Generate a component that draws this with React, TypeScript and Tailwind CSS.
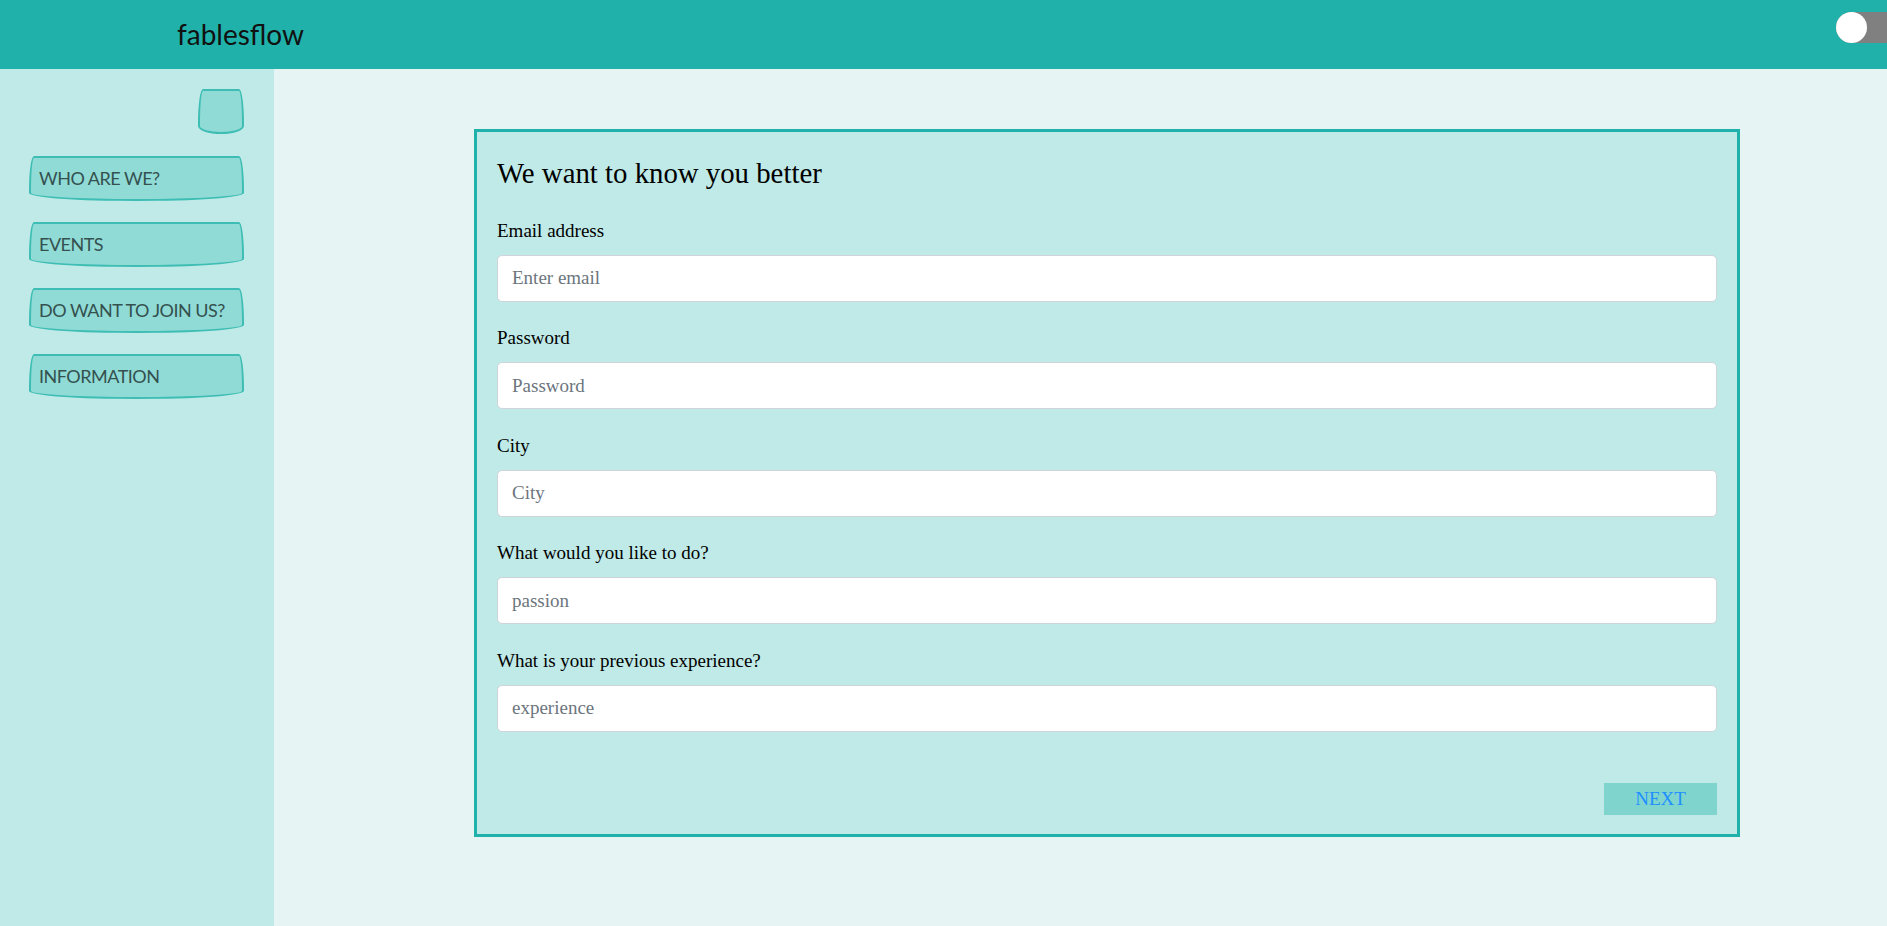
import React from "react";

const navShape =
  "border-2 border-[#3dbdb3] bg-[#90dbd6] rounded-[5px_5px_50%_50%/34px_34px_8px_8px]";

function NavButton({ label }: { label: string }) {
  return (
    <button
      className={`${navShape} ml-[29px] w-[215px] h-[45px] flex items-center pl-[8px] text-left text-[18px] tracking-[-0.5px] text-[#34514f] font-['Lato','Open_Sans',sans-serif]`}
    >
      {label}
    </button>
  );
}

function Field({ label, placeholder, type = "text" }: { label: string; placeholder: string; type?: string }) {
  return (
    <div className="mb-[21.5px]">
      <label className="block text-[19px] leading-[29px] mb-[10px] text-black">{label}</label>
      <input
        type={type}
        placeholder={placeholder}
        className="block w-full h-[47px] bg-white border border-[#ced4da] rounded-[5px] px-[14px] text-[19px] text-[#495057] placeholder:text-[#6c757d] outline-none font-['Liberation_Serif',serif]"
      />
    </div>
  );
}

export default function App() {
  return (
    <div className="h-screen flex flex-col font-['Liberation_Serif',serif] overflow-hidden">
      <header className="relative h-[69px] shrink-0 bg-[#20b2aa] overflow-hidden flex items-center pl-[177px]">
        <span className="text-[28px] text-[#111] font-['Lato',sans-serif] pb-[2px]">fablesflow</span>
        <div className="absolute top-[12px] right-[-24px] w-[75px] h-[31px] rounded-full bg-[#808080]">
          <div className="w-[31px] h-[31px] rounded-full bg-white" />
        </div>
      </header>
      <div className="flex flex-1 min-h-0">
        <aside className="w-[274px] shrink-0 bg-[#c0eae8] flex flex-col pt-[20px]">
          <button className={`${navShape} self-end mr-[30px] w-[46px] h-[45px]`} aria-label="menu" />
          <div className="flex flex-col gap-[21px] mt-[22px]">
            <NavButton label="WHO ARE WE?" />
            <NavButton label="EVENTS" />
            <NavButton label="DO WANT TO JOIN US?" />
            <NavButton label="INFORMATION" />
          </div>
        </aside>
        <main className="flex-1 bg-[#e6f5f4] pt-[60px] pl-[200px]">
          <div className="w-[1266px] border-[3px] border-[#20b2aa] bg-[#c0eae7] px-[20px] pt-[24px] pb-[19px]">
            <h4 className="text-[28.8px] leading-[34.6px] mb-[25px] text-black">We want to know you better</h4>
            <Field label="Email address" placeholder="Enter email" type="email" />
            <Field label="Password" placeholder="Password" type="password" />
            <Field label="City" placeholder="City" />
            <Field label="What would you like to do?" placeholder="passion" />
            <Field label="What is your previous experience?" placeholder="experience" />
            <div className="flex justify-end pt-[30px]">
              <button className="w-[113px] h-[32px] bg-[#80d4ce] text-[#1e8fff] text-[19px]">NEXT</button>
            </div>
          </div>
        </main>
      </div>
    </div>
  );
}
